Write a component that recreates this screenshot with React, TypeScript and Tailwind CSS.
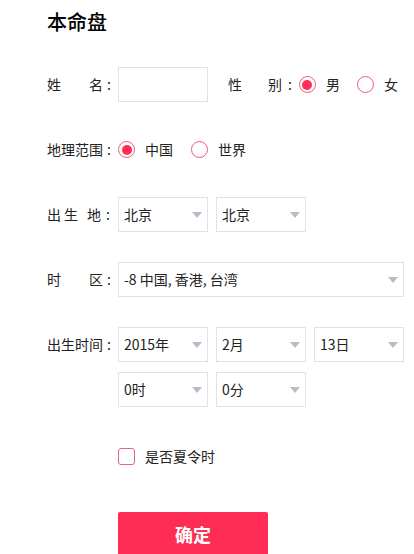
import React, { useState } from 'react';

const font = { fontFamily: '"Noto Sans CJK SC", "Noto Sans", sans-serif' };

function Arrow() {
  return (
    <svg width="10" height="6" viewBox="0 0 10 6" className="shrink-0">
      <path d="M0 0 L10 0 L5 6 Z" fill="#b8bcc6" />
    </svg>
  );
}

function Select({ value, wide }: { value: string; wide?: boolean }) {
  return (
    <div
      className={`h-[35px] ${wide ? 'w-[286px]' : 'w-[90px]'} shrink-0 border border-[#dfe2ea] flex items-center justify-between pl-[5px] pr-[5px] text-[14px] text-[#222]`}
    >
      <span>{value}</span>
      <Arrow />
    </div>
  );
}

function Radio({ checked, label, onClick }: { checked: boolean; label: string; onClick: () => void }) {
  return (
    <button type="button" onClick={onClick} className="flex items-center shrink-0 text-[14px] text-[#222]">
      <span className="w-[17px] h-[17px] shrink-0 rounded-full border-[1.5px] border-[#ec5b7c] flex items-center justify-center">
        {checked && <span className="w-[10px] h-[10px] rounded-full bg-[#ff2d55]" />}
      </span>
      <span className="ml-[10px]">{label}</span>
    </button>
  );
}

function Label({ text }: { text: string }) {
  return (
    <div className="flex items-center w-[71px] shrink-0 text-[14px] text-[#222]">
      <span className="w-[56px] [text-align-last:justify]">{text}</span>
      <span className="ml-[4px]">:</span>
    </div>
  );
}

export default function App() {
  const [gender, setGender] = useState('男');
  const [area, setArea] = useState('中国');
  const [dst, setDst] = useState(false);

  return (
    <div style={font} className="w-[414px] h-[554px] overflow-hidden bg-white pl-[47px]">
      <h1 className="text-[20px] font-medium text-black leading-[28px] pt-[8px]">本命盘</h1>

      <div className="mt-[31px] flex flex-col gap-[30px]">
        <div className="flex items-center h-[35px]">
          <Label text="姓名" />
          <input className="w-[90px] h-[35px] shrink-0 border border-[#dfe2ea] outline-none px-[5px] text-[14px]" />
          <div className="flex items-center shrink-0 ml-[20px] text-[14px] text-[#222]">
            <span className="w-[54px] [text-align-last:justify]">性别</span>
            <span className="ml-[6px] mr-[7px]">:</span>
          </div>
          <div className="flex items-center gap-[17px]">
            <Radio checked={gender === '男'} label="男" onClick={() => setGender('男')} />
            <Radio checked={gender === '女'} label="女" onClick={() => setGender('女')} />
          </div>
        </div>

        <div className="flex items-center h-[35px]">
          <Label text="地理范围" />
          <div className="flex items-center gap-[18px]">
            <Radio checked={area === '中国'} label="中国" onClick={() => setArea('中国')} />
            <Radio checked={area === '世界'} label="世界" onClick={() => setArea('世界')} />
          </div>
        </div>

        <div className="flex items-center h-[35px]">
          <div className="flex items-center w-[71px] shrink-0 text-[14px] text-[#222]">
            <span>出</span>
            <span className="ml-[3px]">生</span>
            <span className="ml-[9px]">地</span>
            <span className="ml-[5px]">:</span>
          </div>
          <div className="flex gap-[8px]">
            <Select value="北京" />
            <Select value="北京" />
          </div>
        </div>

        <div className="flex items-center h-[35px]">
          <Label text="时区" />
          <Select value="-8 中国, 香港, 台湾" wide />
        </div>

        <div className="flex items-start">
          <div className="h-[35px] flex items-center">
            <Label text="出生时间" />
          </div>
          <div className="flex flex-col gap-[10px]">
            <div className="flex gap-[8px]">
              <Select value="2015年" />
              <Select value="2月" />
              <Select value="13日" />
            </div>
            <div className="flex gap-[8px]">
              <Select value="0时" />
              <Select value="0分" />
            </div>
          </div>
        </div>
      </div>

      <div className="ml-[71px] mt-[32px] h-[35px] flex items-center">
        <button type="button" onClick={() => setDst(!dst)} className="flex items-center text-[14px] text-[#222]">
          <span className="w-[17px] h-[17px] rounded-[3px] border-[1.5px] border-[#d46a86] flex items-center justify-center">
            {dst && <span className="w-[9px] h-[9px] bg-[#ff2d55] rounded-[1px]" />}
          </span>
          <span className="ml-[10px]">是否夏令时</span>
        </button>
      </div>

      <button
        type="button"
        className="ml-[71px] mt-[38px] w-[150px] h-[44px] bg-[#ff2d55] rounded-[2px] text-white text-[18px] font-bold"
      >
        确定
      </button>
    </div>
  );
}
